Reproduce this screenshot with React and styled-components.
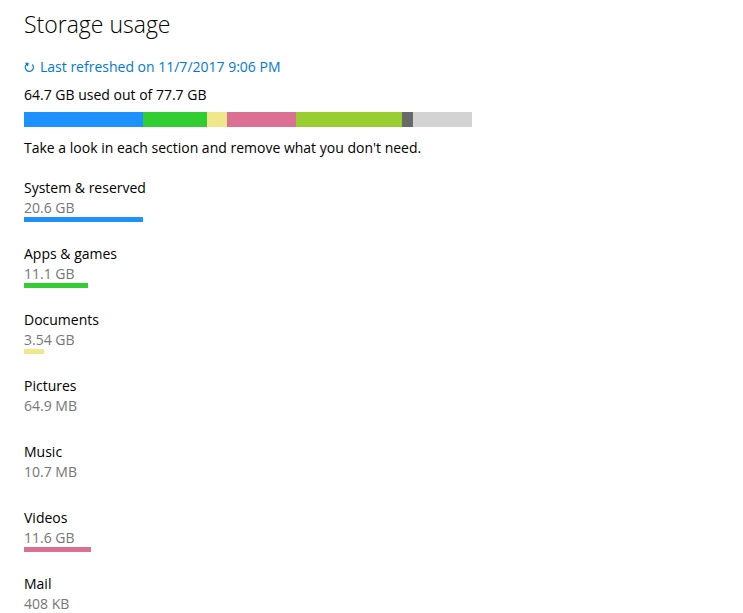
import styled, { createGlobalStyle } from "styled-components";

const Global = createGlobalStyle`
  body {
    margin: 0;
    background: #ffffff;
    font-family: "Open Sans", "Noto Sans", sans-serif;
    color: #000000;
    overflow: hidden;
  }
`;

const Page = styled.main`
  padding: 8px 24px 0;
  width: 448px;
`;

const Title = styled.h1`
  margin: 0;
  font-size: 23px;
  font-weight: 300;
  line-height: 32px;
`;

const Refresh = styled.a`
  display: flex;
  align-items: center;
  gap: 5px;
  margin-top: 17px;
  font-size: 14px;
  line-height: 20px;
  color: #0078d7;
  text-decoration: none;
`;

const Text = styled.p`
  margin: ${(p) => p.$mt || 0}px 0 0;
  font-size: 14px;
  line-height: 20px;
`;

const UsageBar = styled.div`
  display: flex;
  height: 15px;
  margin-top: 7px;
`;

const Segment = styled.span`
  width: ${(p) => p.$w}px;
  background: ${(p) => p.$c};
`;

const List = styled.ul`
  list-style: none;
  margin: 20px 0 0;
  padding: 0;
`;

const Item = styled.li`
  margin-bottom: 22px;

  &:last-child {
    margin-bottom: 0;
  }
`;

const Label = styled.div`
  font-size: 14px;
  line-height: 20px;
`;

const Size = styled.div`
  font-size: 14px;
  line-height: 19px;
  color: #767676;
`;

const ItemBar = styled.div`
  height: 5px;
  width: ${(p) => p.$w}px;
  background: ${(p) => p.$c || "transparent"};
`;

const segments = [
  { w: 119, c: "#1e90ff" },
  { w: 64, c: "#32cd32" },
  { w: 20, c: "#f0e68c" },
  { w: 69, c: "#db7093" },
  { w: 106, c: "#9acd32" },
  { w: 11, c: "#696969" },
  { w: 59, c: "#d3d3d3" },
];

const items = [
  { name: "System & reserved", size: "20.6 GB", w: 119, c: "#1e90ff" },
  { name: "Apps & games", size: "11.1 GB", w: 64, c: "#32cd32" },
  { name: "Documents", size: "3.54 GB", w: 20, c: "#f0e68c" },
  { name: "Pictures", size: "64.9 MB", w: 0 },
  { name: "Music", size: "10.7 MB", w: 0 },
  { name: "Videos", size: "11.6 GB", w: 67, c: "#db7093" },
  { name: "Mail", size: "408 KB", w: 0 },
];

const RefreshIcon = () => (
  <svg width="11" height="11" viewBox="0 0 12 12" fill="none">
    <path
      d="M9.4 3.2A4.4 4.4 0 1 1 3 2.4"
      stroke="#0078d7"
      strokeWidth="1.4"
      strokeLinecap="round"
    />
    <path d="M1.6 1.2L4.4 1.6L3.6 4.4" stroke="#0078d7" strokeWidth="1.4" fill="none" />
  </svg>
);

export default function App() {
  return (
    <>
      <Global />
      <Page>
        <Title>Storage usage</Title>
        <Refresh href="#">
          <RefreshIcon />
          Last refreshed on 11/7/2017 9:06 PM
        </Refresh>
        <Text $mt={8}>64.7 GB used out of 77.7 GB</Text>
        <UsageBar>
          {segments.map((s, i) => (
            <Segment key={i} $w={s.w} $c={s.c} />
          ))}
        </UsageBar>
        <Text $mt={11}>Take a look in each section and remove what you don't need.</Text>
        <List>
          {items.map((it) => (
            <Item key={it.name}>
              <Label>{it.name}</Label>
              <Size>{it.size}</Size>
              <ItemBar $w={it.w} $c={it.c} />
            </Item>
          ))}
        </List>
      </Page>
    </>
  );
}
